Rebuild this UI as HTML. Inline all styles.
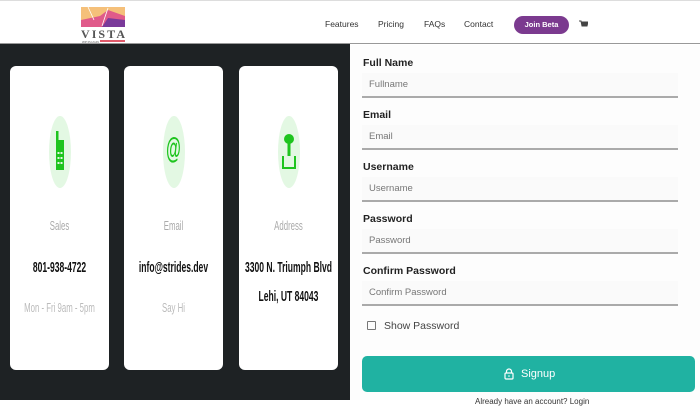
<!DOCTYPE html>
<html><head><style>
*{margin:0;padding:0;box-sizing:border-box}
body{width:700px;height:400px;overflow:hidden;background:#fff;font-family:"Liberation Sans",sans-serif;position:relative}
.hdr{position:absolute;left:0;top:0;width:700px;height:44px;background:#fff;border-bottom:1px solid #999;border-top:1px solid #ddd}
.nav{position:absolute;top:18px;font-size:8.5px;color:#333}
.beta{position:absolute;left:514px;top:15px;width:55px;height:18px;border-radius:9px;background:#7b3a8f;color:#fff;font-size:7.5px;font-weight:bold;text-align:center;line-height:18px}
.dark{position:absolute;left:0;top:44px;width:350px;height:356px;background:#1e2224}
.card{position:absolute;top:66px;width:99px;height:304px;background:#fff;border-radius:6px;text-align:center}
.ov{position:absolute;left:39px;top:50px;width:22px;height:72px;border-radius:50%;background:#e3f8e3}
.lbl{position:absolute;left:-20px;width:139px;top:152px;font-size:13px;color:#aaa;transform:scaleX(.6);white-space:nowrap}
.val{position:absolute;left:-30px;width:159px;font-size:15px;font-weight:bold;color:#111;transform:scaleX(.57);line-height:29px;white-space:nowrap}
.sub{position:absolute;left:-30px;width:159px;top:234px;font-size:13px;color:#bbb;transform:scaleX(.6);white-space:nowrap}
.form{position:absolute;left:350px;top:45px;width:350px;height:355px;background:#fdfdfd}
.fl{position:absolute;left:363px;font-size:10.5px;font-weight:bold;color:#222}
.in{position:absolute;left:362px;width:316px;height:25px;border-bottom:2px solid #aaa;background:#fafafa;font-size:9.5px;color:#777;padding:6px 0 0 7px}
</style></head><body>
<div class="hdr">
 <svg style="position:absolute;left:80px;top:5px" width="46" height="38" viewBox="0 0 46 38">
  <rect x="1" y="1" width="44" height="20" fill="#f5c07a"/>
  <polygon points="1,14 20,10 28,4 45,10 45,21 1,21" fill="#e05a8a"/>
  <polygon points="22,21 28,12 45,14 45,21" fill="#7a3a9a"/>
  <line x1="8" y1="1" x2="14" y2="14" stroke="#fff" stroke-width=".8"/>
  <line x1="28" y1="2" x2="22" y2="20" stroke="#fff" stroke-width=".8"/>
  <text x="1" y="32" font-size="12" font-weight="bold" fill="#555" font-family="Liberation Serif" textLength="44">VISTA</text>
  <text x="2" y="37" font-size="3" fill="#555">WP PLUGIN</text>
  <rect x="20" y="34" width="25" height="2" fill="#e05a6a"/>
 </svg>
 <div class="nav" style="left:325px">Features</div>
 <div class="nav" style="left:378px">Pricing</div>
 <div class="nav" style="left:424px">FAQs</div>
 <div class="nav" style="left:464px">Contact</div>
 <div class="beta">Join Beta</div>
 <svg style="position:absolute;left:579px;top:19px" width="9" height="8"><path d="M0 1H2L3 6H8L9 2H2.5" fill="#444" stroke="#444" stroke-width="1"/></svg>
</div>
<div class="dark"></div>
<div class="card" style="left:10px"><div class="ov"></div>
 <svg style="position:absolute;left:44px;top:62px" width="12" height="46"><rect x="2" y="12" width="8" height="30" fill="#1ec41e"/><rect x="2" y="3" width="2.5" height="10" fill="#1ec41e"/><g fill="#e3f8e3"><rect x="3.5" y="24" width="2" height="2"/><rect x="6.5" y="24" width="2" height="2"/><rect x="3.5" y="29" width="2" height="2"/><rect x="6.5" y="29" width="2" height="2"/><rect x="3.5" y="34" width="2" height="2"/><rect x="6.5" y="34" width="2" height="2"/></g></svg>
 <div class="lbl">Sales</div><div class="val" style="top:187px">801-938-4722</div><div class="sub">Mon - Fri 9am - 5pm</div></div>
<div class="card" style="left:124px"><div class="ov"></div>
 <div style="position:absolute;left:0;width:100%;top:66px;color:#1ec41e;font-size:30px;font-weight:bold;transform:scaleX(.5)">@</div>
 <div class="lbl">Email</div><div class="val" style="top:187px">info@strides.dev</div><div class="sub">Say Hi</div></div>
<div class="card" style="left:239px"><div class="ov"></div>
 <svg style="position:absolute;left:42px;top:62px" width="16" height="44"><circle cx="8" cy="11" r="5" fill="#1ec41e"/><rect x="6.5" y="14" width="3" height="14" fill="#1ec41e"/><path d="M2 28 V40 H14 V28" fill="none" stroke="#1ec41e" stroke-width="2"/></svg>
 <div class="lbl">Address</div><div class="val" style="top:187px">3300 N. Triumph Blvd<br>Lehi, UT 84043</div></div>
<div class="form"></div>
<div class="fl" style="top:57px">Full Name</div><div class="in" style="top:73px">Fullname</div>
<div class="fl" style="top:109px">Email</div><div class="in" style="top:125px">Email</div>
<div class="fl" style="top:161px">Username</div><div class="in" style="top:177px">Username</div>
<div class="fl" style="top:213px">Password</div><div class="in" style="top:229px">Password</div>
<div class="fl" style="top:265px">Confirm Password</div><div class="in" style="top:281px">Confirm Password</div>
<div style="position:absolute;left:367px;top:321px;width:9px;height:9px;border:1px solid #777;border-radius:1px"></div>
<div style="position:absolute;left:384px;top:320px;font-size:10.5px;color:#444">Show Password</div>
<div style="position:absolute;left:362px;top:356px;width:333px;height:36px;background:#20b2a2;border-radius:5px;color:#fff;font-size:11px;line-height:36px">
 <svg style="position:absolute;left:142px;top:12px" width="10" height="12"><path d="M2.5 5V3.5a2.5 2.5 0 0 1 5 0V5" fill="none" stroke="#fff" stroke-width="1.2"/><rect x="1" y="5" width="8" height="6" rx="1" fill="none" stroke="#fff" stroke-width="1.2"/><circle cx="5" cy="8" r=".8" fill="#fff"/></svg>
 <span style="position:absolute;left:159px">Signup</span></div>
<div style="position:absolute;left:475px;top:397px;font-size:8px;color:#333">Already have an account? Login</div>
</body></html>
